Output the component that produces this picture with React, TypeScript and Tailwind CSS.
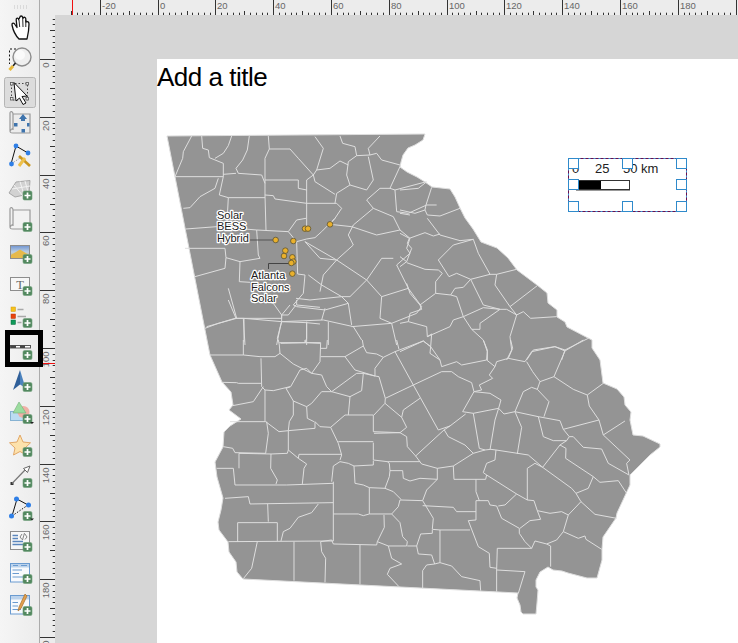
import React from 'react';

// traced from the sheet: each group has its own offset, all scaled 1/3
const OUTLINE =
  '167,136 425,134 423,140 415,145 408,148 403,155 401,162 400,167 407,172 417,177 425,182 432,187 450,189 455,197 460,208 465,218 473,229 481,242 497,248 508,258 517,270 537,285 547,293 548,303 557,310 557,317 565,322 567,327 588,338 592,340 ' +
  '592,348 600,360 603,383 617,389 624,397 625,405 631,412 630,420 633,435 643,436 660,444 660,447 650,455 630,475 630,485 617,513 616,518 603,537 602,549 602,560 597,578 587,578 568,573 562,571 553,570 548,567 540,572 536,580 536,587 538,590 537,603 536,614 523,614 521,612 520,605 517,598 518,593 243,579 237,572 236,562 229,552 228,542 219,530 218,522 221,510 223,498 217,477 215,462 223,447 224,432 230,426 241,419 229,410 233,405 231,392 222,382 210,355 207,340';

const LINES_NW = [
  '95,33 70,80 68,100 45,155', '45,155 190,155', '125,33 128,70 145,75 148,98 190,115 190,155', '165,100 190,85 205,62 215,33',
  '268,33 262,75 248,105 228,130 235,145 305,150 315,175', '190,148 228,145', '190,155 178,210 205,218 315,218',
  '175,160 165,190 120,215 90,248 70,250', '205,218 200,310', '78,312 170,305 290,315 385,320',
  '325,33 328,72 315,100 315,210 318,315', '328,72 390,72 415,100 460,150 440,165 440,310',
  '315,165 415,165 415,190 440,195', '315,210 340,212 345,222 440,235 530,235 545,250 525,280 485,320 465,338 440,342 410,350 413,447 435,450',
  '460,150 470,135 510,130 540,108 565,120', '465,35 490,70 470,135', '540,33 548,55 585,65 590,92 630,90 625,70 660,33',
  '590,92 565,110 560,150 570,180', '630,90 650,85 665,105 720,120', '625,95 640,165 620,195 570,180 530,205 525,235',
  '460,150 465,170 525,208', '720,125 690,190 660,190 620,225 640,250 580,300 565,330 580,360 530,405 435,350',
  '690,190 705,195 800,170', '705,195 710,260 745,265 800,240 830,240', '510,298 575,305', '525,280 510,298',
  '640,250 700,275 720,315 650,330 575,305', '720,265 750,270', '435,350 480,400 530,405 620,465 665,515 745,490 710,420 750,385 740,370 750,340 720,315',
  '620,465 665,400 700,400', '530,405 490,450 480,500', '290,315 295,390 300,400 240,410 198,398 195,370 75,370',
  '198,398 195,430 105,455', '240,410 238,470 270,472', '205,490 230,580 140,605', '270,520 340,535 365,570 390,540',
  '400,540 430,505 435,450', '408,520 450,525 545,515 565,535', '445,450 485,480 545,515 570,515 620,465', '565,535 575,600',
  '365,570 365,590 250,580 230,580', '250,580 255,660', '365,590 360,610 350,660', '365,590 490,585 580,605 605,645',
  '495,550 485,585', '440,590 440,660', '505,590 505,660', '575,605 695,595 710,660', '665,515 660,580 695,595',
  '745,490 785,545 770,565 695,595', '400,540 410,545 495,555 565,535', '385,320 410,285 438,280', '385,320 410,350',
];

const LINES_NE = [
  '0,180 55,175 78,157', '95,172 78,225 75,240 45,250 0,240', '75,240 82,255 120,258 180,235', '82,265 120,315 180,332 220,328',
  '0,310 28,325 75,308 100,318 120,312', '28,325 22,340 35,355 20,395 0,380', '20,395 0,410',
  '20,398 75,418 115,420 127,430 107,455 107,490 60,525 30,490 20,460', '220,328 160,345 115,390 147,440 170,430 212,448 270,433 235,370 220,328',
  '270,433 290,433 350,418', '212,448 190,472 165,475 152,495 107,490', '152,495 170,500 190,560 250,533 300,538 240,580 240,598 215,598 190,560',
  '290,433 285,465 330,530 412,467', '212,448 250,525 300,538', '330,530 350,555 330,620 335,660 320,690', '350,555 370,545 392,565 470,560',
  '300,538 320,538 350,555', '60,525 65,538 30,550 25,575 80,590 82,620 150,590 160,570 190,560', '25,575 0,580',
  '82,620 95,612 92,650 120,690', '0,665 70,633 92,650', '215,598 250,630 262,660 262,690', '565,625 495,660 465,650 400,660 380,690', '495,660 485,690',
];

const LINES_W = [
  '205,0 228,55', '135,85 175,70 225,55 365,55', '252,55 252,125', '365,55 365,45 385,45 408,15', '410,0 410,15 480,22',
  '354,120 352,115 365,65 440,68 480,72', '362,130 440,128 480,130', '440,68 440,115 435,128',
];

const LINES_S = [
  '130,0 130,45', '30,45 130,45 180,50 225,50 240,40', '235,0 238,15 240,40 280,72 335,100 360,65 362,8 238,8', '315,0 315,8',
  '362,25 380,25 382,0', '362,50 435,50 490,18 487,0',
  '435,50 465,90 525,108 525,85 550,52 585,35 670,3 692,20 690,40 720,60 725,80 770,65 785,75 860,60 885,80',
  '490,18 500,38 530,42 550,52', '590,0 597,28', '585,35 640,135 715,270 750,258', '850,0 862,35 860,60',
  '932,0 938,25 925,55 975,65 995,35 1065,20 1095,33 1150,0', '925,55 890,65 885,80 868,105 878,115 838,135 845,150 822,155',
  '1095,33 1062,110 1020,125 998,95 980,65', '1062,110 1120,148 1162,165 1210,130',
  '1020,125 1012,148 995,142 970,155 945,215 1015,230 1080,242 1090,268 1197,240', '1012,148 1047,185 1032,230',
  '1162,165 1168,198 1197,240 1210,285 1275,243', '1015,230 1030,290 1060,302 1100,302 1108,290 1090,268',
  '1108,290 1120,290 1150,322 1205,327 1225,370 1287,405 1280,370 1290,360 1210,285',
  '1100,302 1080,315 1028,382 985,345 888,330 872,328 855,330 820,340 760,378 712,385 665,372 647,348 732,270 750,258',
  '1080,315 1098,325 1097,355 1180,410 1200,427 1255,422 1280,460', '1180,410 1165,445 1128,460 1115,445 1028,382',
  '1028,382 1005,370 982,385 982,480 1002,482 1012,512 1050,520 1085,515 1105,525 1143,485 1128,460', '1143,485 1185,523 1250,535',
  '1105,525 1090,575 1135,595 1155,588 1158,598 1205,628',
  '1090,575 1070,600 1040,612 1005,603 995,625 892,625 890,690 975,695 955,760', '1040,612 1052,618 1052,680', '890,690 890,755',
  '995,625 975,605 958,580 958,565 905,535 890,498 870,495 865,482 828,482 828,540 805,542 835,620 868,640 870,682 890,685',
  '1012,512 1022,538 990,542 960,565', '895,498 915,495 950,462 860,405 850,398 860,370 885,360 888,330', '950,462 982,480',
  '860,405 857,418 762,418 760,378', '828,418 828,455 838,482',
  '712,385 712,418 680,450 668,482 600,480 595,500 575,522 508,522 490,527 475,522 400,522 400,425',
  '712,418 660,415 630,423 610,415 608,392 570,392 568,370 562,365 520,360 520,308', '562,365 660,365',
  '570,392 568,410 555,445 580,455 603,478', '555,445 508,443 508,522', '508,443 490,435 465,430 462,378 520,375 520,362',
  '462,378 445,370 420,365 400,378 395,425', '668,497 760,502 770,515 828,515', '668,482 700,535 697,568 720,570 810,570',
  '575,522 600,548 608,590 622,605 620,618 565,618 532,605 553,562 552,525',
  '697,570 697,580 662,582 650,618 655,642 695,645 704,672 720,668 755,678 785,710 840,722 842,752', '720,570 720,668',
  '704,672 680,675 668,692 668,745', '622,618 650,618', '565,618 575,655 605,672 570,685 562,703 597,740',
  '532,605 530,615 400,612 395,600 362,605', '480,615 480,733', '400,603 400,522', '400,488 150,492 145,470 75,475',
  '400,430 260,435 105,435 100,385 50,385', '117,340 117,385', '117,340 213,342 262,340 265,330 295,355 320,372 312,385 307,432',
  '213,342 212,385 232,420 228,432', '295,355 297,343 425,343', '265,272 265,330', '200,245 205,280 197,340', '70,320 98,325 105,338 197,340',
  '90,245 197,245 237,275 265,272 345,265 345,245 360,260 392,262 435,225 520,225 520,275 600,278 620,262 605,232 555,190 556,175 640,135 725,95 755,95 775,110 815,128 822,155 870,160 903,180 896,205 820,220 788,215 822,155',
  '556,175 537,110 525,108', '605,232 610,210 660,175', '555,190 522,225', '600,278 620,290 622,320 647,348', '522,280 600,278', '415,305 520,305',
  '392,262 415,310 425,345 420,360',
  '445,225 450,170 395,155 365,155 335,190 320,200 280,183 258,145 272,140 300,90 320,85 335,100 365,105 380,140 395,155 470,100 490,100 525,108',
  '490,100 485,152 450,170', '320,200 322,235 342,245', '280,183 280,225 268,245 265,272',
  '270,140 220,152 195,150 185,140 183,55', '183,130 115,130 110,128 65,127', '190,140 160,185 98,197', '195,150 195,245',
  '113,548 232,548 232,603', '113,548 113,605', '85,605 400,603', '203,492 205,545', '355,492 335,518 295,532 270,565 250,575 243,603',
  '172,605 155,685 130,716', '282,605 282,722', '362,605 365,635 377,655 375,727', '896,205 885,240 870,330', '820,220 838,325 855,330',
  '896,205 912,222 945,215 965,262 952,342', '733,270 745,290 795,315 820,340', '750,258 797,222',
];

const SITES = [
  [347, 345], [400, 348], [435, 311], [444, 311], [510, 298], [376, 377], [372, 393], [397, 397], [400, 410], [394, 414], [397, 446],
];

const LineGroup = ({ x, y, lines }: { x: number; y: number; lines: string[] }) => (
  <g transform={`translate(${x} ${y}) scale(0.3333)`} fill="none" stroke="#dedede" strokeWidth="3" strokeLinejoin="round">
    {lines.map((pts, i) => (
      <polyline key={i} points={pts} />
    ))}
  </g>
);

const MapLabel = ({ x, y, lines }: { x: number; y: number; lines: string[] }) => (
  <text fontFamily="'Liberation Sans', sans-serif" fontSize="11" fill="#1c1c1c" stroke="#fff" strokeWidth="2.5" strokeLinejoin="round" style={{ paintOrder: 'stroke' }}>
    {lines.map((l, i) => (
      <tspan key={l} x={x} y={y + i * 11.7}>{l}</tspan>
    ))}
  </text>
);

const GeorgiaMap = () => (
  <svg className="absolute left-0 top-0" width="581" height="584" viewBox="157 59 581 584">
    <polygon points={OUTLINE} fill="#949494" stroke="#dedede" strokeWidth="1" />
    <LineGroup x={160} y={125} lines={LINES_NW} />
    <LineGroup x={400} y={130} lines={LINES_NE} />
    <LineGroup x={160} y={300} lines={LINES_W} />
    <LineGroup x={200} y={340} lines={LINES_S} />
    <path d="M250 240H275" stroke="#555" strokeWidth="1" fill="none" />
    <path d="M268.5 269V263.5H292" stroke="#444" strokeWidth="1" fill="none" />
    {SITES.map(([cx, cy], i) => (
      <circle key={i} cx={160 + cx / 3} cy={125 + cy / 3} r="2.8" fill="#e9b02c" stroke="#5c5436" strokeWidth="0.8" />
    ))}
    <MapLabel x={217} y={218.5} lines={['Solar', 'BESS', 'Hybrid']} />
    <MapLabel x={251} y={279} lines={['Atlanta', 'Falcons', 'Solar']} />
  </svg>
);

const Handle = ({ className }: { className: string }) => (
  <div className={`absolute w-[11px] h-[11px] bg-white border border-[#2f8acb] ${className}`} />
);

const ScaleBarItem = () => (
  <div className="absolute left-[411px] top-[99px] w-[119px] h-[54px] font-['Liberation_Sans',sans-serif] text-[13px] text-[#222]">
    <svg className="absolute inset-0" width="119" height="54">
      <rect x="0.5" y="0.5" width="118" height="53" fill="none" stroke="#6b0f4e" />
      <rect x="0.5" y="0.5" width="118" height="53" fill="none" stroke="#3f9ad8" strokeDasharray="2 3" />
    </svg>
    <span className="absolute left-[4px] top-[3px] leading-[15px]">0</span>
    <span className="absolute left-[27px] top-[3px] leading-[15px]">25</span>
    <span className="absolute left-[55px] top-[3px] leading-[15px]">50 km</span>
    <div className="absolute left-[8px] top-[22px] w-[54px] h-[10px] flex border border-[#333] shadow-[0_1px_0_#999]">
      <div className="w-[24px] bg-black" />
      <div className="flex-1 bg-white" />
    </div>
    <Handle className="left-0 top-0" />
    <Handle className="left-[54px] top-0" />
    <Handle className="right-0 top-0" />
    <Handle className="left-0 top-[21px]" />
    <Handle className="right-0 top-[21px]" />
    <Handle className="left-0 bottom-0" />
    <Handle className="left-[54px] bottom-0" />
    <Handle className="right-0 bottom-0" />
  </div>
);

const STEP = 5.78;
const TICKS = Array.from({ length: 130 }, (_, i) => i - 15);

const TopRuler = () => (
  <svg className="block" width="698" height="15">
    <rect width="698" height="15" fill="#ececec" />
    {TICKS.map((n) => {
      const x = Math.round(117.6 + n * STEP) + 0.5;
      if (x < 17) return null;
      if (n % 10 === 0) return null;
      return <line key={n} x1={x} x2={x} y1={n % 5 === 0 ? 11 : 12.7} y2="15" stroke="#333" strokeWidth="1" />;
    })}
    {[-20, 0, 20, 40, 60, 80, 100, 120, 140, 160, 180].map((v) => {
      const x = Math.round(117.6 + v * 2.89) + 0.5;
      return (
        <g key={v}>
          <line x1={x} x2={x} y1="0" y2="15" stroke="#333" />
          <text x={x + 1.5} y="8.5" fontSize="9.5" fill="#666" fontFamily="'Liberation Sans', sans-serif">{v}</text>
        </g>
      );
    })}
    <line x1="696.5" x2="696.5" y1="0" y2="15" stroke="#333" />
    <line x1="32.5" x2="32.5" y1="0" y2="15" stroke="#f01010" />
  </svg>
);

const LeftRuler = () => (
  <svg className="block shrink-0" width="15" height="628">
    <rect width="15" height="628" fill="#ececec" />
    {TICKS.map((n) => {
      const y = Math.round(44 + n * STEP) + 0.5;
      if (y < 2 || n % 10 === 0) return null;
      return <line key={n} x1={n % 5 === 0 ? 10 : 12.7} x2="15" y1={y} y2={y} stroke="#333" />;
    })}
    {[0, 20, 40, 60, 80, 100, 120, 140, 160, 180, 200].map((v) => {
      const y = Math.round(44 + v * 2.89) + 0.5;
      return (
        <g key={v}>
          <line x1="0" x2="15" y1={y} y2={y} stroke="#333" />
          <text transform={`translate(8.5 ${y + 3}) rotate(-90)`} textAnchor="end" fontSize="9.5" fill="#666" fontFamily="'Liberation Sans', sans-serif">{v}</text>
        </g>
      );
    })}
    <line x1="3" x2="15" y1="348.5" y2="348.5" stroke="#f01010" />
  </svg>
);

// green "add" badge on the toolbar icons
const Plus = ({ x = 27.5, y }: { x?: number; y: number }) => (
  <g>
    <rect x={x - 4.5} y={y - 4.5} width="9" height="9" rx="1.5" fill="#52885f" stroke="#6f9f7b" strokeWidth="0.6" />
    <path d={`M${x - 3} ${y}H${x + 3}M${x} ${y - 3}V${y + 3}`} stroke="#fff" strokeWidth="1.7" />
  </g>
);

const ICONS: React.ReactNode[] = [
  // pan
  <g key="pan" fill="#fff" stroke="#111" strokeWidth="1.3" strokeLinejoin="round">
    <path d="M19 27C16 24 13 18 12 13C11.7 11 14 10.5 15 12.5L17 15.5L16.2 8C16 5.8 18.2 5.5 18.7 7.5L19.8 5.5C20 3.5 22.3 3.5 22.7 5.5L23.2 6C24.5 4.5 26 5.5 25.8 7.5L26 10C27.5 9 29 10 29 12L28.5 19L27 27Z" />
    <path d="M19 8L19.7 15M22.7 6L23 15M25.8 8L25.8 15" fill="none" strokeWidth="0.9" />
  </g>,
  // zoom
  <g key="zoom">
    <path d="M20 5H9.5V20" fill="none" stroke="#111" strokeDasharray="2 2" />
    <circle cx="22" cy="13" r="9" fill="#efefef" stroke="#8c8c8c" strokeWidth="1.4" />
    <circle cx="20" cy="11" r="5" fill="#fafafa" />
    <path d="M15.5 19L13 22" stroke="#222" strokeWidth="1.6" />
    <path d="M13 22L9.5 26" stroke="#e8b93a" strokeWidth="3" />
  </g>,
  // select
  <g key="select">
    <rect x="4.5" y="1.5" width="31" height="30" rx="2" fill="#dcdcdc" stroke="#b5b5b5" />
    <rect x="11.5" y="7.5" width="16" height="16.5" fill="none" stroke="#444" strokeDasharray="1.5 2" />
    <g fill="#eee" stroke="#555" strokeWidth="0.8">
      <rect x="10.5" y="6.5" width="2.5" height="2.5" />
      <rect x="26" y="6.5" width="2.5" height="2.5" />
      <rect x="10.5" y="21.5" width="2.5" height="2.5" />
      <rect x="26" y="21.5" width="2.5" height="2.5" />
    </g>
    <path d="M14 6.5L27 20L22 20.5L26 27L23 28.5L19.5 22L16 25Z" fill="#fff" stroke="#111" strokeWidth="1" strokeLinejoin="round" />
  </g>,
  // move item content
  <g key="move">
    <path d="M13 6H30V25H13C10 25 10 24 10 22V5C10 3 13 3 13 6V22C13 20 10.5 21 10.5 23" fill="#ececec" stroke="#9a9a9a" strokeWidth="1.2" />
    <path d="M23 6L27 11H25V13H21V11H19Z" fill="#3f74ad" />
    <rect x="14" y="15" width="3.5" height="3.5" fill="#3f74ad" />
    <rect x="27" y="15" width="2.5" height="3.5" fill="#3f74ad" />
    <rect x="21.5" y="21" width="3.5" height="3.5" fill="#3f74ad" />
  </g>,
  // edit nodes
  <g key="nodes">
    <path d="M16 6L28 13M16 6L11 24" stroke="#111" fill="none" />
    <path d="M11 24L20 18" stroke="#999" strokeDasharray="1.5 1.5" />
    <circle cx="16" cy="6" r="2.4" fill="#2f7fe6" />
    <circle cx="28" cy="13" r="2.4" fill="#2f7fe6" />
    <circle cx="11.5" cy="24" r="2.4" fill="#2f7fe6" />
    <path d="M19 25L24 19" stroke="#d9dde0" strokeWidth="2.5" />
    <path d="M19 16L30 26" stroke="#c9961f" strokeWidth="2.6" />
    <path d="M19 26L25 18" stroke="#eec04a" strokeWidth="3" />
  </g>,
  // add 3d map
  <g key="map3d">
    <path d="M9 21L16 10L30 8.5L29 22L15 25Z" fill="#d2d2d2" stroke="#a8a8a8" />
    <path d="M12 17L30 14M14 13L23 24M20 9.5L24 23M25 9L28 20" stroke="#f2f2f2" fill="none" />
    <Plus y={23.5} />
  </g>,
  // add map
  <g key="map">
    <path d="M13 6H30V25H13C10 25 10 24 10 22V5C10 3 13 3 13 6V22C13 20 10.5 21 10.5 23" fill="#f2f2f2" stroke="#9a9a9a" strokeWidth="1.2" />
    <Plus y={23} />
  </g>,
  // add picture
  <g key="picture">
    <defs>
      <linearGradient id="picSky" x1="0" y1="0" x2="0" y2="1">
        <stop offset="0" stopColor="#6f93cf" />
        <stop offset="0.5" stopColor="#bcd0e6" />
        <stop offset="1" stopColor="#e0b040" />
      </linearGradient>
    </defs>
    <rect x="10.5" y="9.5" width="19" height="13" fill="url(#picSky)" stroke="#8d8d8d" />
    <path d="M11 19L20 13.5L29 19V22H11Z" fill="#e6b94b" />
    <Plus y={23} />
  </g>,
  // add label
  <g key="label">
    <rect x="10.5" y="9.5" width="19" height="13" fill="#f7f7f7" stroke="#8d8d8d" />
    <text x="20" y="20.5" textAnchor="middle" fontSize="12.5" fill="#666" fontFamily="'Liberation Serif', serif">T</text>
    <Plus y={23} />
  </g>,
  // add legend
  <g key="legend">
    <rect x="11" y="7" width="4.5" height="4.5" fill="#f6c21c" stroke="#d09a10" strokeWidth="0.5" />
    <rect x="11" y="14" width="4.5" height="4.5" fill="#e8440c" stroke="#b8340a" strokeWidth="0.5" />
    <rect x="11" y="20" width="4.5" height="4.5" fill="#0f9a5a" stroke="#0a6a3a" strokeWidth="0.5" />
    <path d="M17.5 9.5H23.5M17.5 16.5H26M17.5 22.5H21.5" stroke="#a8a8a8" strokeWidth="1.5" />
    <Plus y={23} />
  </g>,
  // add scale bar
  <g key="scale">
    <rect x="10.5" y="13.5" width="20" height="2.5" fill="#fff" stroke="#555" />
    <path d="M11 14.7H16M20 14.7H25" stroke="#444" strokeWidth="2.4" />
    <Plus y={23} />
  </g>,
  // add north arrow
  <g key="north">
    <path d="M20 6L13 26L20 20.5Z" fill="#2f5f99" />
    <path d="M20 6L25.5 24L20 20.5Z" fill="#4b82bd" />
    <Plus y={23} />
  </g>,
  // add shape
  <g key="shape">
    <rect x="10.5" y="15.5" width="15" height="9" fill="#bcdcf2" stroke="#86b2d2" />
    <circle cx="23.5" cy="16" r="6" fill="#f0b0a6" />
    <path d="M19 6L13 17H26Z" fill="#9bdc9e" stroke="#74b07a" strokeWidth="0.6" />
    <Plus y={23} />
    <path d="M30 26H34L32 28Z" fill="#222" />
  </g>,
  // add marker
  <g key="marker">
    <path d="M20 7L23 14L30.5 14.8L25 20L26.5 27L20 23.5L13.5 27L15 20L9.5 14.8L17 14Z" fill="#fde2ac" stroke="#e2a868" strokeWidth="1" strokeLinejoin="round" />
    <Plus y={24} />
  </g>,
  // add arrow
  <g key="arrow">
    <rect x="10.5" y="22" width="3" height="3" fill="#333" />
    <path d="M12 23.5L25 10" stroke="#777" strokeWidth="1.2" />
    <path d="M30 6L23.5 8.5L27.5 12.5Z" fill="#fff" stroke="#666" strokeWidth="1" />
    <Plus y={23} />
  </g>,
  // add node item
  <g key="nodeitem">
    <path d="M17 7L28 13M17 7L12 24" stroke="#111" fill="none" />
    <path d="M12 24L28 13" stroke="#111" strokeDasharray="1.5 1.5" fill="none" />
    <circle cx="16.5" cy="7" r="2.5" fill="#2f7fe6" />
    <circle cx="28.5" cy="13" r="2.5" fill="#2f7fe6" />
    <circle cx="11.5" cy="24" r="2.5" fill="#2f7fe6" />
    <Plus y={24} />
    <path d="M30 26.5H34L32 28.5Z" fill="#222" />
  </g>,
  // add html frame
  <g key="html">
    <rect x="10.5" y="7.5" width="19" height="18" fill="#f7f7f7" stroke="#8d8d8d" />
    <path d="M12.5 11.5H18M12.5 14.5H18M12.5 17.5H23M12.5 20.5H23" stroke="#5b86bd" strokeWidth="1.5" />
    <path d="M22 10L20 13L22 15.5M25 10L27 13L25 15.5M24.5 9L22.5 16" stroke="#555" strokeWidth="0.7" fill="none" />
    <Plus y={23} />
  </g>,
  // add attribute table
  <g key="table">
    <rect x="10.5" y="7.5" width="19" height="18.5" fill="#f8fafd" stroke="#6a9bd0" />
    <rect x="11" y="8" width="18" height="3.5" fill="#bcd3ec" />
    <path d="M13 9.5H18M21 9.5H27M12.5 14H22M12.5 17.5H19M12.5 21H24" stroke="#6a9bd0" strokeWidth="1.1" />
    <Plus y={23} />
  </g>,
  // add fixed table
  <g key="fixed">
    <rect x="10.5" y="7.5" width="19" height="18.5" fill="#f8fafd" stroke="#6a9bd0" />
    <rect x="11" y="8" width="18" height="3.5" fill="#bcd3ec" />
    <path d="M12.5 14.5H18M12.5 18H18M12.5 21.5H21" stroke="#6a9bd0" strokeWidth="1.1" />
    <path d="M25 6L19 19L18 23L21 20.5L27 8Z" fill="#e2a04e" stroke="#a8702c" strokeWidth="0.7" />
    <Plus y={23} />
  </g>,
];

const Toolbar = () => (
  <aside className="relative w-[40px] shrink-0 border-r border-[#ababab] bg-gradient-to-r from-[#f5f5f5] to-[#ececec] pt-[12px]">
    <div className="absolute left-[13px] top-[5px] w-[16px] h-[4px] bg-[radial-gradient(#c4c4c4_0.7px,transparent_0.8px)] bg-[length:3px_2px]" />
    <div className="flex flex-col">
      {ICONS.map((icon, i) => (
        <svg key={i} className="block" width="39" height="32" viewBox="0 0 39 32">
          {icon}
        </svg>
      ))}
    </div>
    {/* black highlight around the scale bar tool */}
    <div className="absolute left-[5px] top-[330px] w-[38px] h-[37px] border-[5px] border-black" />
  </aside>
);

export default function App() {
  return (
    <div className="flex h-[643px] w-[738px] overflow-hidden bg-[#d6d6d6] font-['Liberation_Sans',sans-serif]">
      <Toolbar />
      <div className="flex min-w-0 flex-1 flex-col">
        <TopRuler />
        <div className="flex min-h-0 flex-1">
          <LeftRuler />
          <main className="min-w-0 flex-1 pl-[102px] pt-[44px]">
            <div className="relative h-full bg-white">
              <h1 className="text-[26px] leading-[36px] tracking-[-0.5px] text-black">Add a title</h1>
              <GeorgiaMap />
              <ScaleBarItem />
            </div>
          </main>
        </div>
      </div>
    </div>
  );
}
